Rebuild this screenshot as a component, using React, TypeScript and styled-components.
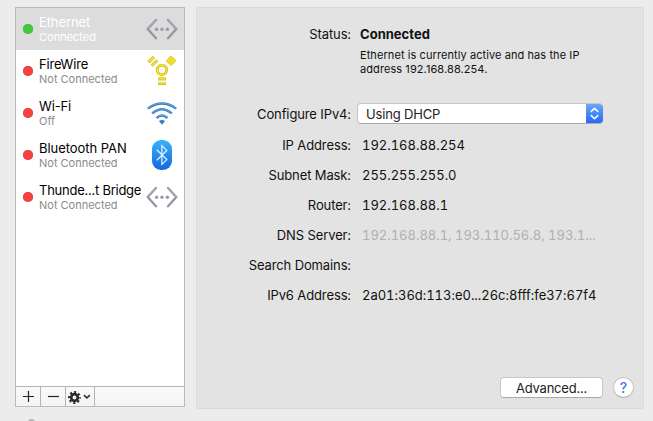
import React from 'react';
import styled, { createGlobalStyle } from 'styled-components';

const GlobalStyle = createGlobalStyle`
  * { box-sizing: border-box; }
  html, body { margin: 0; height: 100%; overflow: hidden; background: #ececec; }
  body { font: 13px/16px Inter, "Liberation Sans", sans-serif; color: #111; }
`;

const Window = styled.main`
  display: flex;
  align-items: flex-start;
  gap: 11px;
  width: 653px;
  height: 421px;
  padding: 7px 0 0 15px;
  overflow: hidden;
`;

const Sidebar = styled.aside`
  display: flex;
  flex-direction: column;
  width: 170px;
  flex: none;
`;

const ServiceBox = styled.section`
  display: flex;
  flex-direction: column;
  height: 400px;
  flex: none;
  border: 1px solid #b9b9b9;
  background: #fff;
`;

const ServiceList = styled.ul`
  flex: 1;
  margin: 0;
  padding: 0;
  list-style: none;
`;

const ServiceRow = styled.li<{ $selected?: boolean }>`
  display: flex;
  align-items: center;
  height: 42px;
  padding-left: 7px;
  background: ${p => (p.$selected ? '#dcdcdc' : 'transparent')};
  color: ${p => (p.$selected ? '#fff' : '#000')};
`;

const Dot = styled.span<{ $on?: boolean }>`
  width: 10px;
  height: 10px;
  flex: none;
  border-radius: 50%;
  background: ${p => (p.$on ? '#43c93c' : '#f7423f')};
  box-shadow: inset 0 0 0 0.5px ${p => (p.$on ? '#39b334' : '#e03a38')};
`;

const ServiceText = styled.div`
  width: 107px;
  margin-left: 6px;
  padding-top: 2px;
  flex: none;
  white-space: nowrap;
`;

const ServiceName = styled.div<{ $track: number }>`
  letter-spacing: ${p => p.$track}px;
  line-height: 15px;
`;

const ServiceState = styled.div<{ $selected?: boolean }>`
  font-size: 11px;
  line-height: 15px;
  color: ${p => (p.$selected ? '#fff' : '#8b8b8b')};
`;

const IconSlot = styled.span`
  display: flex;
  width: 32px;
  height: 32px;
  flex: none;
`;

const Toolbar = styled.div`
  display: flex;
  height: 20px;
  flex: none;
  border-top: 1px solid #b4b4b4;
  background: linear-gradient(#f9f9f9, #f4f4f4);
`;

const ToolButton = styled.button<{ $width: number }>`
  display: flex;
  width: ${p => p.$width}px;
  padding: 0;
  border: 0;
  border-right: 1px solid #b4b4b4;
  background: transparent;
`;

const LockHint = styled.span`
  width: 7px;
  height: 8px;
  margin: 12px 0 0 13px;
  border-radius: 4px 4px 0 0;
  background: #b5b5b5;
`;

const Panel = styled.section`
  display: flex;
  flex-direction: column;
  width: 448px;
  height: 402px;
  flex: none;
  padding: 18px 9px 0 0;
  border: 1px solid #dadada;
  border-radius: 2px;
  background: #e3e3e3;
`;

const StatusRow = styled.div`
  display: flex;
  height: 72px;
  flex: none;
`;

const Row = styled.div<{ $height?: number }>`
  display: flex;
  align-items: center;
  height: ${p => p.$height ?? 30}px;
  flex: none;
`;

const Label = styled.span`
  width: 154px;
  flex: none;
  text-align: right;
  white-space: nowrap;
  letter-spacing: -0.12px;
`;

const Value = styled.span<{ $muted?: boolean }>`
  margin-left: 11px;
  white-space: nowrap;
  font-variant-numeric: tabular-nums;
  letter-spacing: -0.02px;
  color: ${p => (p.$muted ? '#b0b0b0' : '#111')};
`;

const StatusText = styled.div`
  margin-left: 9px;
`;

const StatusTitle = styled.div`
  font-weight: 700;
  letter-spacing: 0.02px;
`;

const StatusDetail = styled.p`
  margin: 6px 0 0;
  font-size: 11px;
  line-height: 14px;
  letter-spacing: 0.08px;
  white-space: nowrap;
`;

const Select = styled.button`
  display: flex;
  align-items: center;
  justify-content: space-between;
  width: 246px;
  height: 21px;
  margin: 0 0 1px 6px;
  padding: 0 0 0 8px;
  overflow: hidden;
  border: 1px solid #c4c4c4;
  border-bottom-color: #aaa;
  border-right: 0;
  border-radius: 4px;
  background: #fff;
  color: #222;
  font: inherit;
`;

const SelectLabel = styled.span`
  letter-spacing: -0.17px;
`;

const Stepper = styled.span`
  display: flex;
  width: 17px;
  height: 21px;
  flex: none;
  background: linear-gradient(#6cabf8, #2267f5);
`;

const Footer = styled.footer`
  display: flex;
  align-items: center;
  justify-content: flex-end;
  gap: 10px;
  margin-top: auto;
  padding-bottom: 10px;
`;

const AdvancedButton = styled.button`
  width: 103px;
  height: 21px;
  padding: 0;
  border: 1px solid #c6c6c6;
  border-bottom-color: #aaa;
  border-radius: 4px;
  background: #fff;
  color: #222;
  font: inherit;
  line-height: 18px;
  letter-spacing: -0.2px;
`;

const HelpButton = styled.button`
  width: 21px;
  height: 21px;
  padding: 0;
  border: 1px solid #c4c4c4;
  border-bottom-color: #aaa;
  border-radius: 50%;
  background: #fff;
  color: #3c7ce0;
  font: 500 14px/18px Inter, sans-serif;
`;

function EthernetIcon() {
  return (
    <svg width="32" height="32" viewBox="0 0 32 32" fill="none">
      <g stroke="#9297a1" strokeWidth="2.3" strokeLinecap="round" strokeLinejoin="miter">
        <path d="M10 7 L1.7 16 L10 25.3" />
        <path d="M22 7 L30.3 16 L22 25.3" />
      </g>
      <path d="M9.7 7.2 L1.7 15.8 M22.3 7.2 L30.2 15.8" stroke="#b3b7bf" strokeWidth=".8" />
      <g fill="#989da7">
        <circle cx="10.6" cy="16.2" r="1.7" />
        <circle cx="16" cy="16.2" r="1.7" />
        <circle cx="21.4" cy="16.2" r="1.7" />
      </g>
    </svg>
  );
}

function FireWireIcon() {
  return (
    <svg width="32" height="32" viewBox="0 0 32 32" fill="none">
      <g stroke="#d3bf22" strokeWidth="3.1">
        <circle cx="15.9" cy="14.9" r="4.7" />
        <path d="M2.5 7.2 L8 2 M5.7 10.6 L11.3 5.4 M12 23.9 H20 M12 28.5 H20" />
      </g>
      <path d="M20.2 6 L24.8 1 L30 5.5 L25.2 10.5 Z" fill="#f1df28" stroke="#d3bf22" strokeWidth=".8" />
      <g stroke="#f3e239" strokeWidth="1.7">
        <circle cx="15.9" cy="14.9" r="4.7" />
        <path d="M3 6.7 L7.6 2.4 M6.2 10.1 L10.9 5.8 M12.5 23.6 H19.5 M12.5 28.2 H19.5" />
      </g>
    </svg>
  );
}

function WifiIcon() {
  return (
    <svg width="32" height="32" viewBox="0 0 32 32" fill="none">
      <defs>
        <linearGradient id="wave" x1="0" y1="5" x2="0" y2="27" gradientUnits="userSpaceOnUse">
          <stop stopColor="#3476b8" />
          <stop offset="1" stopColor="#397fd4" />
        </linearGradient>
      </defs>
      <g stroke="url(#wave)" strokeWidth="2.4">
        <path d="M1.8 11.6 Q16 1.2 30.2 11.6" />
        <path d="M6.2 16.4 Q16 7.9 25.8 16.4" />
        <path d="M10.6 21 Q16 16 21.4 21" />
      </g>
      <path d="M2 11.1 Q16 .9 30 11.1 M6.5 15.8 Q16 7.7 25.5 15.8 M11 20.4 Q16 15.8 21 20.4" stroke="#6fb3ec" strokeWidth=".8" />
      <path d="M12.9 24 Q16 21.9 19.1 24 L16 27.7 Z" fill="#357ace" />
    </svg>
  );
}

function BluetoothIcon() {
  return (
    <svg width="32" height="32" viewBox="0 0 32 32" fill="none">
      <defs>
        <linearGradient id="tooth" x1="0" y1="1" x2="0" y2="31" gradientUnits="userSpaceOnUse">
          <stop stopColor="#37b4fc" />
          <stop offset="1" stopColor="#1766df" />
        </linearGradient>
      </defs>
      <rect x="6" y="1" width="20" height="30" rx="9" fill="url(#tooth)" />
      <path d="M10.8 10.8 L20.8 20.6 L15.9 25.4 V6.6 L20.8 11.4 L10.8 21.2" stroke="#e6f5ff" strokeWidth="1.2" />
    </svg>
  );
}

function PlusIcon() {
  return (
    <svg width="24" height="19" viewBox="0 0 24 19" stroke="#222" strokeWidth="1.2">
      <path d="M7 9.5 H18 M12.5 4 V15" />
    </svg>
  );
}

function MinusIcon() {
  return (
    <svg width="24" height="19" viewBox="0 0 24 19" stroke="#222" strokeWidth="1.2">
      <path d="M7 9.5 H18" />
    </svg>
  );
}

function GearMenuIcon() {
  return (
    <svg width="28" height="19" viewBox="0 0 28 19" fill="none" stroke="#2b2b2b">
      <circle cx="8.5" cy="10.5" r="3.3" strokeWidth="2.7" />
      <circle cx="8.5" cy="10.5" r="5.3" strokeWidth="2.3" strokeDasharray="2.1 2.063" strokeDashoffset="1.05" />
      <path d="M18 8.2 L20.9 11 L23.8 8.2" strokeWidth="1.6" />
    </svg>
  );
}

function StepperIcon() {
  return (
    <svg width="17" height="21" viewBox="0 0 17 21" fill="none" stroke="#fff" strokeWidth="1.5" strokeLinecap="round" strokeLinejoin="round">
      <path d="M5.3 8.4 L8.5 5.3 L11.7 8.4 M5.3 12.6 L8.5 15.7 L11.7 12.6" />
    </svg>
  );
}

const services = [
  { name: 'Ethernet', state: 'Connected', Icon: EthernetIcon, on: true, track: -0.1 },
  { name: 'FireWire', state: 'Not Connected', Icon: FireWireIcon, track: -0.2 },
  { name: 'Wi-Fi', state: 'Off', Icon: WifiIcon, track: -0.15 },
  { name: 'Bluetooth PAN', state: 'Not Connected', Icon: BluetoothIcon, track: -0.05 },
  { name: 'Thunde...t Bridge', state: 'Not Connected', Icon: EthernetIcon, track: -0.25 },
];

const fields = [
  { label: 'IP Address:', value: '192.168.88.254' },
  { label: 'Subnet Mask:', value: '255.255.255.0' },
  { label: 'Router:', value: '192.168.88.1' },
  { label: 'DNS Server:', value: '192.168.88.1, 193.110.56.8, 193.1...', muted: true },
  { label: 'Search Domains:', value: '' },
  { label: 'IPv6 Address:', value: '2a01:36d:113:e0...26c:8fff:fe37:67f4' },
];

export default function App() {
  return (
    <>
      <GlobalStyle />
      <Window>
        <Sidebar>
          <ServiceBox>
            <ServiceList>
              {services.map(({ name, state, Icon, on, track }) => (
                <ServiceRow key={name} $selected={on}>
                  <Dot $on={on} />
                  <ServiceText>
                    <ServiceName $track={track}>{name}</ServiceName>
                    <ServiceState $selected={on}>{state}</ServiceState>
                  </ServiceText>
                  <IconSlot><Icon /></IconSlot>
                </ServiceRow>
              ))}
            </ServiceList>
            <Toolbar>
              <ToolButton $width={25} aria-label="Add service"><PlusIcon /></ToolButton>
              <ToolButton $width={25} aria-label="Remove service"><MinusIcon /></ToolButton>
              <ToolButton $width={29} aria-label="Service actions"><GearMenuIcon /></ToolButton>
            </Toolbar>
          </ServiceBox>
          <LockHint />
        </Sidebar>
        <Panel>
          <StatusRow>
            <Label>Status:</Label>
            <StatusText>
              <StatusTitle>Connected</StatusTitle>
              <StatusDetail>
                Ethernet is currently active and has the IP<br />address 192.168.88.254.
              </StatusDetail>
            </StatusText>
          </StatusRow>
          <Row $height={32}>
            <Label>Configure IPv4:</Label>
            <Select>
              <SelectLabel>Using DHCP</SelectLabel>
              <Stepper><StepperIcon /></Stepper>
            </Select>
          </Row>
          {fields.map(f => (
            <Row key={f.label}>
              <Label>{f.label}</Label>
              <Value $muted={f.muted}>{f.value}</Value>
            </Row>
          ))}
          <Footer>
            <AdvancedButton>Advanced...</AdvancedButton>
            <HelpButton aria-label="Help">?</HelpButton>
          </Footer>
        </Panel>
      </Window>
    </>
  );
}
